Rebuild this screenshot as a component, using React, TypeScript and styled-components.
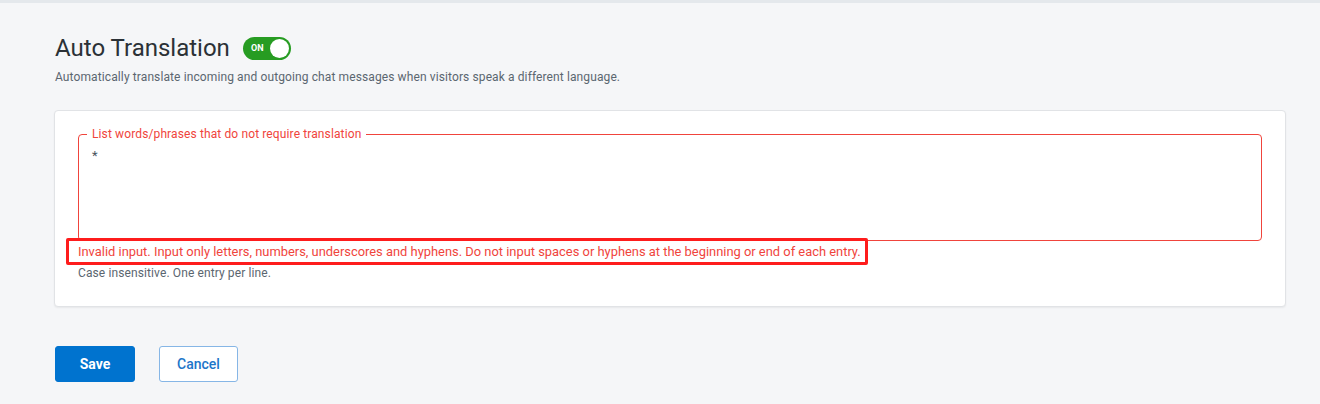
import React from "react";
import styled, { createGlobalStyle } from "styled-components";

const GlobalStyle = createGlobalStyle`
  html, body {
    margin: 0;
    padding: 0;
    background: #f5f6f8;
    font-family: Roboto, "Liberation Sans", Arial, sans-serif;
  }
  * { box-sizing: border-box; }
`;

const Page = styled.div`
  min-height: 404px;
  background: #f5f6f8;
`;

const TopBar = styled.div`
  height: 3px;
  background: #e4e8ec;
`;

const Content = styled.div`
  padding: 29px 34px 0 54px;
`;

const Header = styled.div`
  display: flex;
  align-items: center;
  gap: 13px;
  height: 32px;
  padding-left: 1px;
`;

const Title = styled.h1`
  margin: 0;
  font-size: 24px;
  line-height: 32px;
  font-weight: 400;
  color: #2b3136;
`;

const Toggle = styled.div`
  position: relative;
  width: 48px;
  height: 23px;
  border-radius: 12px;
  background: #279c22;
  display: flex;
  align-items: center;
  padding-left: 8px;
`;

const ToggleLabel = styled.span`
  color: #fff;
  font-size: 9px;
  font-weight: 700;
  letter-spacing: 0.2px;
`;

const Knob = styled.span`
  position: absolute;
  right: 2px;
  top: 2px;
  width: 19px;
  height: 19px;
  border-radius: 50%;
  background: #fff;
`;

const Subtitle = styled.p`
  margin: 5px 0 0 1px;
  font-size: 12px;
  line-height: 16px;
  letter-spacing: 0.11px;
  color: #5b6670;
`;

const Card = styled.div`
  margin-top: 25px;
  background: #fff;
  border: 1px solid #e1e3e6;
  border-radius: 4px;
  box-shadow: 0 1px 2px rgba(0, 0, 0, 0.06);
  padding: 15px 23px 25px 23px;
`;

const Field = styled.fieldset`
  margin: 0;
  padding: 0;
  border: 1px solid #f0443c;
  border-radius: 4px;
  min-width: 0;
`;

const Legend = styled.legend`
  margin-left: 8px;
  padding: 0 5px;
  font-size: 12px;
  line-height: 16px;
  letter-spacing: 0.12px;
  color: #f0443c;
`;

const TextArea = styled.textarea`
  display: block;
  width: 100%;
  height: 98px;
  border: none;
  outline: none;
  resize: none;
  padding: 5px 13px;
  font-family: Roboto, "Liberation Sans", Arial, sans-serif;
  font-size: 13px;
  line-height: 18px;
  color: #4a5560;
  background: transparent;
`;

const ErrorBox = styled.div`
  display: inline-block;
  margin: -4px 0 0 -12px;
  border: 3px solid #fe1c1c;
  border-radius: 2px;
  padding: 0 4px 0 9px;
  font-size: 12.9px;
  line-height: 21px;
  color: #f0443c;
  position: relative;
  background: #fff;
`;

const Hint = styled.div`
  font-size: 12px;
  line-height: 16px;
  letter-spacing: 0.11px;
  color: #5b6670;
`;

const Actions = styled.div`
  display: flex;
  gap: 24px;
  margin-top: 39px;
  padding-left: 1px;
`;

const Button = styled.button<{ $primary?: boolean }>`
  height: 36px;
  width: ${(p) => (p.$primary ? "80px" : "79px")};
  border-radius: 3px;
  font-family: Roboto, "Liberation Sans", Arial, sans-serif;
  font-size: 14px;
  font-weight: ${(p) => (p.$primary ? 700 : 500)};
  cursor: pointer;
  background: ${(p) => (p.$primary ? "#0073cf" : "#ffffff")};
  color: ${(p) => (p.$primary ? "#ffffff" : "#1d76c9")};
  border: 1px solid ${(p) => (p.$primary ? "#0073cf" : "#86b6e6")};
`;

export default function App() {
  return (
    <>
      <GlobalStyle />
      <Page>
        <TopBar />
        <Content>
          <Header>
            <Title>Auto Translation</Title>
            <Toggle>
              <ToggleLabel>ON</ToggleLabel>
              <Knob />
            </Toggle>
          </Header>
          <Subtitle>
            Automatically translate incoming and outgoing chat messages when visitors speak a different language.
          </Subtitle>
          <Card>
            <Field>
              <Legend>List words/phrases that do not require translation</Legend>
              <TextArea defaultValue="*" />
            </Field>
            <ErrorBox>
              Invalid input. Input only letters, numbers, underscores and hyphens. Do not input spaces or hyphens at the beginning or end of each entry.
            </ErrorBox>
            <Hint>Case insensitive. One entry per line.</Hint>
          </Card>
          <Actions>
            <Button $primary>Save</Button>
            <Button>Cancel</Button>
          </Actions>
        </Content>
      </Page>
    </>
  );
}
